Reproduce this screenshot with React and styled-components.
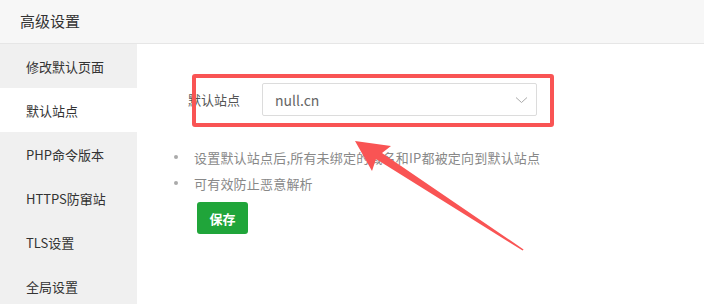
import styled, { createGlobalStyle } from 'styled-components';

const GlobalStyle = createGlobalStyle`
  body {
    margin: 0;
    background: #fff;
    font-family: "Noto Sans CJK SC", "Noto Sans", sans-serif;
  }
`;

const Panel = styled.div`
  position: relative;
  width: 704px;
  height: 305px;
  overflow: hidden;
  background: #fff;
`;

const Header = styled.div`
  height: 44px;
  display: flex;
  align-items: center;
  padding-left: 20px;
  padding-bottom: 2px;
  box-sizing: border-box;
  background: #f7f7f7;
  border-bottom: 1px solid #e6e6e6;
  font-size: 15px;
  color: #333;
`;

const Body = styled.div`
  display: flex;
  height: 260px;
`;

const Sidebar = styled.ul`
  width: 137px;
  margin: 0;
  padding: 0;
  list-style: none;
  background: #f0f0f0;
`;

const NavItem = styled.li`
  height: 44px;
  display: flex;
  align-items: center;
  padding-left: 26px;
  font-size: 13px;
  color: #333;
  background: ${(p) => (p.$active ? '#fff' : 'transparent')};
`;

const Content = styled.div`
  flex: 1;
  padding-top: 39px;
`;

const FormRow = styled.div`
  display: flex;
  align-items: center;
  gap: 22px;
  margin-left: 51px;
`;

const Label = styled.span`
  font-size: 13px;
  color: #555;
`;

const Select = styled.div`
  width: 275px;
  height: 33px;
  box-sizing: border-box;
  display: flex;
  align-items: center;
  justify-content: space-between;
  padding: 0 8px 0 12px;
  border: 1px solid #dcdcdc;
  border-radius: 2px;
  font-size: 14px;
  color: #666;
`;

const Notes = styled.ul`
  margin: 28px 0 0;
  padding: 0 0 0 37px;
  list-style: none;
`;

const Note = styled.li`
  display: flex;
  align-items: center;
  gap: 16px;
  height: 26px;
  font-size: 13px;
  letter-spacing: 0.2px;
  color: #888;

  &::before {
    content: '';
    width: 4px;
    height: 4px;
    border-radius: 50%;
    background: #aaa;
  }
`;

const SaveButton = styled.button`
  margin: 6px 0 0 60px;
  width: 51px;
  height: 32px;
  border: 0;
  border-radius: 3px;
  background: #20a53a;
  color: #fff;
  font-family: inherit;
  font-size: 13px;
  font-weight: 700;
  padding: 0;
`;

const Highlight = styled.div`
  position: absolute;
  left: 192px;
  top: 74px;
  width: 362px;
  height: 53px;
  box-sizing: border-box;
  border: 4px solid #f95454;
  border-radius: 3px;
  pointer-events: none;
`;

const Arrow = styled.svg`
  position: absolute;
  left: 0;
  top: 0;
  pointer-events: none;
`;

const navItems = ['修改默认页面', '默认站点', 'PHP命令版本', 'HTTPS防窜站', 'TLS设置', '全局设置'];

export default function App() {
  return (
    <>
      <GlobalStyle />
      <Panel>
        <Header>高级设置</Header>
        <Body>
          <Sidebar>
            {navItems.map((item) => (
              <NavItem key={item} $active={item === '默认站点'}>
                {item}
              </NavItem>
            ))}
          </Sidebar>
          <Content>
            <FormRow>
              <Label>默认站点</Label>
              <Select>
                <span>null.cn</span>
                <svg width="13" height="8" viewBox="0 0 13 8">
                  <path d="M1 1.5 L6.5 6.5 L12 1.5" fill="none" stroke="#aaa" strokeWidth="1" />
                </svg>
              </Select>
            </FormRow>
            <Notes>
              <Note>设置默认站点后,所有未绑定的域名和IP都被定向到默认站点</Note>
              <Note>可有效防止恶意解析</Note>
            </Notes>
            <SaveButton>保存</SaveButton>
          </Content>
        </Body>
        <Highlight />
        <Arrow width="704" height="305" viewBox="0 0 704 305">
          <polygon
            points="355,141 391,146 382,153 523.6,249.4 522.6,250.6 376,159 372,171"
            fill="#f95454"
          />
        </Arrow>
      </Panel>
    </>
  );
}
